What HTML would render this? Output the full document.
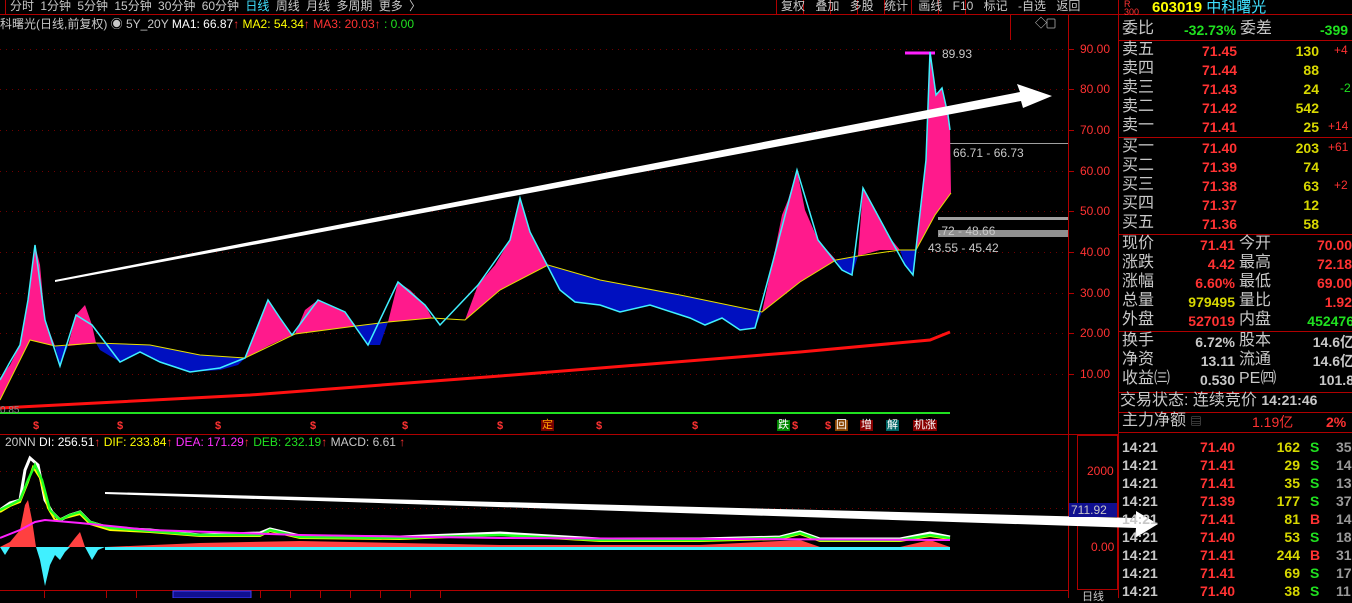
<!DOCTYPE html>
<html><head><meta charset="utf-8"><style>
*{margin:0;padding:0;box-sizing:border-box}
body{width:1352px;height:598px;background:#000;overflow:hidden;position:relative;font-family:"Liberation Sans","Noto Sans CJK SC",sans-serif;font-size:13px;color:#c8c8c8}
.a{position:absolute;white-space:nowrap;line-height:1}
.r{color:#ff3232}.y{color:#d8d800}.g{color:#20e020}.w{color:#c8c8c8}.c{color:#40e0ff}
.rp{position:absolute;left:1122px;width:230px;font-size:16px}
.rp div{position:absolute;white-space:nowrap;line-height:1}
.b{font-weight:bold}
</style></head><body>
<svg width="1352" height="598" style="position:absolute;left:0;top:0">
<line x1="0" y1="14.5" x2="1352" y2="14.5" stroke="#b00000"/>
<line x1="1068.5" y1="14" x2="1068.5" y2="598" stroke="#b00000"/>
<line x1="1118.5" y1="0" x2="1118.5" y2="598" stroke="#b00000"/>
<line x1="0" y1="434.5" x2="1068" y2="434.5" stroke="#b00000"/>
<line x1="0" y1="590.5" x2="1068" y2="590.5" stroke="#b00000"/>
<line x1="1068" y1="434.5" x2="1118" y2="434.5" stroke="#b00000"/>
<line x1="1118" y1="40.5" x2="1352" y2="40.5" stroke="#b00000"/>
<line x1="1118" y1="137.5" x2="1352" y2="137.5" stroke="#b00000"/>
<line x1="1118" y1="234.5" x2="1352" y2="234.5" stroke="#b00000"/>
<line x1="1118" y1="331.5" x2="1352" y2="331.5" stroke="#b00000"/>
<line x1="1118" y1="392.5" x2="1352" y2="392.5" stroke="#b00000"/>
<line x1="1118" y1="412.5" x2="1352" y2="412.5" stroke="#b00000"/>
<line x1="1118" y1="432.5" x2="1352" y2="432.5" stroke="#b00000"/>
<line x1="1010.5" y1="14" x2="1010.5" y2="40" stroke="#b00000"/>
<rect x="1077.5" y="435.5" width="40" height="154" fill="none" stroke="#b00000"/>
<g stroke="#b00000">
<line x1="776.5" y1="0" x2="776.5" y2="14"/><line x1="803.5" y1="0" x2="803.5" y2="14"/><line x1="830.5" y1="0" x2="830.5" y2="14"/><line x1="857.5" y1="0" x2="857.5" y2="14"/><line x1="884.5" y1="0" x2="884.5" y2="14"/><line x1="911.5" y1="0" x2="911.5" y2="14"/><line x1="938.5" y1="0" x2="938.5" y2="14"/><line x1="965.5" y1="0" x2="965.5" y2="14"/><line x1="5.5" y1="0" x2="5.5" y2="14"/></g>
<g stroke="#700000" stroke-dasharray="1,5">
<line x1="0" y1="49.5" x2="1068" y2="49.5"/><line x1="0" y1="89.5" x2="1068" y2="89.5"/><line x1="0" y1="130.5" x2="1068" y2="130.5"/><line x1="0" y1="171.5" x2="1068" y2="171.5"/><line x1="0" y1="211.5" x2="1068" y2="211.5"/><line x1="0" y1="252.5" x2="1068" y2="252.5"/><line x1="0" y1="293.5" x2="1068" y2="293.5"/><line x1="0" y1="333.5" x2="1068" y2="333.5"/><line x1="0" y1="374.5" x2="1068" y2="374.5"/>
<line x1="0" y1="471.5" x2="1068" y2="471.5"/><line x1="0" y1="508.5" x2="1068" y2="508.5"/>
</g>
<g stroke="#b00000"><line x1="1069" y1="49.5" x2="1074" y2="49.5"/><line x1="1069" y1="89.5" x2="1074" y2="89.5"/><line x1="1069" y1="130.5" x2="1074" y2="130.5"/><line x1="1069" y1="171.5" x2="1074" y2="171.5"/><line x1="1069" y1="211.5" x2="1074" y2="211.5"/><line x1="1069" y1="252.5" x2="1074" y2="252.5"/><line x1="1069" y1="293.5" x2="1074" y2="293.5"/><line x1="1069" y1="333.5" x2="1074" y2="333.5"/><line x1="1069" y1="374.5" x2="1074" y2="374.5"/></g>
<line x1="950" y1="143.5" x2="1068" y2="143.5" stroke="#a0a0a0"/>
<rect x="938" y="217" width="130" height="3" fill="#a0a0a0"/>
<rect x="938" y="230" width="130" height="7" fill="#909090"/>
<line x1="905" y1="53" x2="935" y2="53" stroke="#ff20ff" stroke-width="3"/>
<g fill="#ff1a8c">
<polygon points="0,378 10,365 20,345 28,300 35,245 40,265 45,320 55,346 30,340 0,400"/>
<polygon points="68,346 76,315 85,305 92,325 96,343"/>
<polygon points="245,358 258,325 268,300 280,318 292,335 270,345"/>
<polygon points="295,334 305,310 318,300 330,305 345,312 356,326 325,330"/>
<polygon points="388,322 398,282 410,290 425,305 432,318 410,320"/>
<polygon points="465,320 478,285 495,265 510,240 520,198 530,232 548,265 500,290"/>
<polygon points="762,312 772,265 782,215 788,200 797,170 805,210 818,240 836,260 800,282"/>
<polygon points="858,256 863,188 875,210 890,238 900,250 880,250"/>
<polygon points="916,250 922,200 926,160 930,52 936,95 942,88 948,115 950,130 951,193 935,215"/>
</g>
<g fill="#0010c0">
<polygon points="55,346 60,366 68,346"/>
<polygon points="96,343 150,345 200,355 245,358 238,365 220,370 190,372 160,362 140,352 120,362 100,350"/>
<polygon points="356,326 388,322 380,345 368,345"/>
<polygon points="548,265 600,280 680,295 762,312 755,328 740,330 722,318 705,325 690,318 668,310 650,305 620,312 600,305 575,302 560,290"/>
<polygon points="836,260 858,256 852,275 842,270"/>
<polygon points="900,250 916,250 913,275 905,265"/>
</g>
<polyline fill="none" stroke="#e8e000" stroke-width="1" points="0,400 30,340 55,346 96,343 150,345 200,355 245,358 295,334 356,326 388,322 432,318 465,320 500,290 548,265 600,280 680,295 762,312 800,282 836,260 858,256 900,250 916,250 935,215 951,193"/>
<polyline fill="none" stroke="#40f0ff" stroke-width="1.5" points="0,380 10,362 20,345 28,300 35,245 45,320 60,366 76,315 92,325 120,362 140,352 160,362 190,372 220,368 245,358 268,300 280,318 292,335 318,300 345,312 368,345 398,282 425,305 440,325 478,285 510,240 520,198 530,232 560,290 575,302 600,305 620,312 650,305 690,318 705,325 722,318 740,330 755,328 772,265 797,170 818,240 842,270 852,275 863,188 890,238 905,265 913,275 926,160 930,52 936,95 942,88 948,115 950,130"/>
<polyline fill="none" stroke="#ff1010" stroke-width="3" points="0,408 250,395 500,376 800,352 930,340 950,332"/>
<line x1="0" y1="413" x2="950" y2="413" stroke="#20e020" stroke-width="2"/>
<polygon points="55,280 1020,92 1017,84 1052,96 1023,108 1021,101 55,282" fill="#fff"/>
<polygon points="105,492 1136,518 1136,511 1158,524 1135,538 1136,528 105,494" fill="#fff"/>
<polygon points="0,547 10,542 20,530 25,505 28,500 32,520 36,547" fill="#ff4040"/>
<polygon points="36,547 40,560 45,586 50,565 55,555 60,560 65,552 70,547" fill="#40f0ff"/>
<polygon points="68,547 75,538 80,532 85,547" fill="#ff4040"/>
<polygon points="85,547 92,560 98,550 105,547" fill="#40f0ff"/>
<polygon points="105,547 200,543 300,541 500,545 700,545 800,540 820,547" fill="#ff4040"/>
<polygon points="0,547 5,555 10,547" fill="#40f0ff"/>
<rect x="105" y="547" width="845" height="3" fill="#40f0ff"/>
<polygon points="900,547 930,540 950,547" fill="#ff4040"/>
<polyline fill="none" stroke="#fff" stroke-width="3" points="0,510 10,503 20,500 25,470 30,458 38,465 45,500 52,512 60,520 70,515 80,512 90,522 110,528 150,530 200,535 260,533 270,529 300,536 400,537 500,533 600,539 700,539 780,537 800,532 820,539 900,539 930,533 950,537"/>
<polyline fill="none" stroke="#ffff00" stroke-width="2" points="0,512 10,506 20,502 28,482 33,467 40,478 48,508 55,520 65,518 80,514 90,524 110,530 150,532 200,536 260,536 270,531 300,538 400,539 500,535 600,541 700,541 780,539 800,534 820,541 900,541 930,536 950,539"/>
<polyline fill="none" stroke="#20ff20" stroke-width="2.5" points="0,510 10,505 20,500 28,480 35,465 42,480 50,510 60,520 70,515 80,512 90,522 110,528 150,531 200,535 260,535 270,530 300,537 400,538 500,535 600,540 700,540 780,538 800,533 820,540 900,540 930,535 950,538"/>
<polyline fill="none" stroke="#ff20ff" stroke-width="2" points="0,538 20,530 35,522 45,520 80,523 150,530 300,535 500,538 950,540"/>
<g stroke="#b00000"><line x1="44.5" y1="591" x2="44.5" y2="598"/><line x1="106.5" y1="591" x2="106.5" y2="598"/><line x1="136.5" y1="591" x2="136.5" y2="598"/><line x1="260.5" y1="591" x2="260.5" y2="598"/><line x1="290.5" y1="591" x2="290.5" y2="598"/><line x1="320.5" y1="591" x2="320.5" y2="598"/><line x1="350.5" y1="591" x2="350.5" y2="598"/><line x1="380.5" y1="591" x2="380.5" y2="598"/><line x1="410.5" y1="591" x2="410.5" y2="598"/><line x1="440.5" y1="591" x2="440.5" y2="598"/></g>
<rect x="173" y="591" width="78" height="7" fill="#101090" stroke="#4040ff"/>
<rect x="1069" y="503" width="48" height="14" fill="#101090"/>
<rect x="1047" y="19" width="8" height="9" fill="none" stroke="#888" rx="1"/>
</svg>
<div class="a w" style="left:10px;top:0;font-size:12px;word-spacing:3px">分时 1分钟 5分钟 15分钟 30分钟 60分钟 <span class="c">日线</span> 周线 月线 多周期 更多 〉</div>
<div class="a w" style="left:781px;top:0;font-size:12px;word-spacing:7px">复权 叠加 多股 统计 画线 F10 标记 -自选 返回</div>
<div class="a" style="left:1124px;top:0;font-size:9px;color:#ff3232;line-height:8px">R<br>300</div>
<div class="a" style="left:1152px;top:0;font-size:15px;font-weight:bold;color:#ffff00">603019 <span class="c" style="font-weight:normal">中科曙光</span></div>
<div class="a" style="left:0;top:18px;font-size:12px"><span class="w">科曙光(日线,前复权) ◉ 5Y_20Y</span> <span style="color:#fff">MA1: 66.87</span><span class="r">↑</span> <span style="color:#ffff00">MA2: 54.34</span><span class="r">↑</span> <span class="r">MA3: 20.03↑</span> <span class="g">: 0.00</span></div>
<div class="a w" style="left:1035px;top:17px;font-size:12px">◇</div>
<div class="a r" style="left:1080px;top:43px;font-size:12px">90.00</div>
<div class="a r" style="left:1080px;top:83px;font-size:12px">80.00</div>
<div class="a r" style="left:1080px;top:124px;font-size:12px">70.00</div>
<div class="a r" style="left:1080px;top:165px;font-size:12px">60.00</div>
<div class="a r" style="left:1080px;top:205px;font-size:12px">50.00</div>
<div class="a r" style="left:1080px;top:246px;font-size:12px">40.00</div>
<div class="a r" style="left:1080px;top:287px;font-size:12px">30.00</div>
<div class="a r" style="left:1080px;top:327px;font-size:12px">20.00</div>
<div class="a r" style="left:1080px;top:368px;font-size:12px">10.00</div>
<div class="a r" style="left:1087px;top:465px;font-size:12px">2000</div>
<div class="a r" style="left:1091px;top:541px;font-size:12px">0.00</div>
<div class="a w" style="left:1071px;top:504px;font-size:12px">711.92</div>
<div class="a w" style="left:1082px;top:592px;font-size:11px">日线</div>
<div class="a w" style="left:942px;top:48px;font-size:12px">89.93</div>
<div class="a w" style="left:953px;top:147px;font-size:12px">66.71 - 66.73</div>
<div class="a w" style="left:938px;top:225px;font-size:12px">.72 - 48.66</div>
<div class="a w" style="left:928px;top:242px;font-size:12px">43.55 - 45.42</div>
<div class="a w" style="left:0;top:406px;font-size:10px;color:#888">0.85</div>
<div class="a r" style="top:421px;left:0;font-size:11px;font-weight:bold">
<span style="position:absolute;left:33px">$</span><span style="position:absolute;left:117px">$</span><span style="position:absolute;left:215px">$</span><span style="position:absolute;left:310px">$</span><span style="position:absolute;left:402px">$</span><span style="position:absolute;left:497px">$</span><span style="position:absolute;left:596px">$</span><span style="position:absolute;left:692px">$</span><span style="position:absolute;left:792px">$</span><span style="position:absolute;left:825px">$</span></div>
<div class="a" style="left:541px;top:420px;font-size:11px;background:#700;color:#ffa000;padding:0 1px">定</div>
<div class="a" style="left:777px;top:420px;font-size:11px;background:#080;color:#fff;padding:0 1px">跌</div>
<div class="a" style="left:835px;top:420px;font-size:11px;background:#840;color:#fff;padding:0 1px">回</div>
<div class="a" style="left:860px;top:420px;font-size:11px;background:#800;color:#fff;padding:0 1px">增</div>
<div class="a" style="left:886px;top:420px;font-size:11px;background:#066;color:#fff;padding:0 1px">解</div>
<div class="a" style="left:913px;top:420px;font-size:11px;background:#800;color:#fff;padding:0 1px">机涨</div>
<div class="a" style="left:5px;top:436px;font-size:12px"><span class="w">20NN</span> <span style="color:#fff">DI: 256.51</span><span class="r">↑</span> <span style="color:#ffff00">DIF: 233.84</span><span class="r">↑</span> <span style="color:#ff30ff">DEA: 171.29</span><span class="r">↑</span> <span class="g">DEB: 232.19</span><span class="r">↑</span> <span class="w">MACD: 6.61</span> <span class="r">↑</span></div>
<div class="rp" style="top:0;height:598px">
<div style="left:0;top:21px" class="w">委比</div><div style="left:62px;top:23px;font-size:14px" class="g b">-32.73%</div><div style="left:118px;top:21px" class="w">委差</div><div style="left:198px;top:23px;font-size:14px" class="g b">-399</div>
</div>
<div class="rp" style="top:0;height:598px">
<div class="w" style="left:0;top:42px">卖五</div><div class="r b" style="left:80px;top:44px;font-size:14px">71.45</div><div class="y b" style="left:157px;top:44px;font-size:14px;width:40px;text-align:right">130</div><div class="r" style="left:212px;top:44px;font-size:12px">+4</div>
<div class="w" style="left:0;top:61px">卖四</div><div class="r b" style="left:80px;top:63px;font-size:14px">71.44</div><div class="y b" style="left:157px;top:63px;font-size:14px;width:40px;text-align:right">88</div>
<div class="w" style="left:0;top:80px">卖三</div><div class="r b" style="left:80px;top:82px;font-size:14px">71.43</div><div class="y b" style="left:157px;top:82px;font-size:14px;width:40px;text-align:right">24</div><div class="g" style="left:218px;top:82px;font-size:12px">-2</div>
<div class="w" style="left:0;top:99px">卖二</div><div class="r b" style="left:80px;top:101px;font-size:14px">71.42</div><div class="y b" style="left:157px;top:101px;font-size:14px;width:40px;text-align:right">542</div>
<div class="w" style="left:0;top:118px">卖一</div><div class="r b" style="left:80px;top:120px;font-size:14px">71.41</div><div class="y b" style="left:157px;top:120px;font-size:14px;width:40px;text-align:right">25</div><div class="r" style="left:206px;top:120px;font-size:12px">+14</div>
<div class="w" style="left:0;top:139px">买一</div><div class="r b" style="left:80px;top:141px;font-size:14px">71.40</div><div class="y b" style="left:157px;top:141px;font-size:14px;width:40px;text-align:right">203</div><div class="r" style="left:206px;top:141px;font-size:12px">+61</div>
<div class="w" style="left:0;top:158px">买二</div><div class="r b" style="left:80px;top:160px;font-size:14px">71.39</div><div class="y b" style="left:157px;top:160px;font-size:14px;width:40px;text-align:right">74</div>
<div class="w" style="left:0;top:177px">买三</div><div class="r b" style="left:80px;top:179px;font-size:14px">71.38</div><div class="y b" style="left:157px;top:179px;font-size:14px;width:40px;text-align:right">63</div><div class="r" style="left:212px;top:179px;font-size:12px">+2</div>
<div class="w" style="left:0;top:196px">买四</div><div class="r b" style="left:80px;top:198px;font-size:14px">71.37</div><div class="y b" style="left:157px;top:198px;font-size:14px;width:40px;text-align:right">12</div>
<div class="w" style="left:0;top:215px">买五</div><div class="r b" style="left:80px;top:217px;font-size:14px">71.36</div><div class="y b" style="left:157px;top:217px;font-size:14px;width:40px;text-align:right">58</div>
<div class="w" style="left:0;top:236px">现价</div><div class="r b" style="left:40px;top:238px;width:73px;text-align:right;font-size:14px">71.41</div><div class="w" style="left:117px;top:236px">今开</div><div class="r b" style="left:160px;top:238px;width:70px;text-align:right;font-size:14px">70.00</div>
<div class="w" style="left:0;top:255px">涨跌</div><div class="r b" style="left:40px;top:257px;width:73px;text-align:right;font-size:14px">4.42</div><div class="w" style="left:117px;top:255px">最高</div><div class="r b" style="left:160px;top:257px;width:70px;text-align:right;font-size:14px">72.18</div>
<div class="w" style="left:0;top:274px">涨幅</div><div class="r b" style="left:40px;top:276px;width:73px;text-align:right;font-size:14px">6.60%</div><div class="w" style="left:117px;top:274px">最低</div><div class="r b" style="left:160px;top:276px;width:70px;text-align:right;font-size:14px">69.00</div>
<div class="w" style="left:0;top:293px">总量</div><div class="y b" style="left:40px;top:295px;width:73px;text-align:right;font-size:14px">979495</div><div class="w" style="left:117px;top:293px">量比</div><div class="r b" style="left:160px;top:295px;width:70px;text-align:right;font-size:14px">1.92</div>
<div class="w" style="left:0;top:312px">外盘</div><div class="r b" style="left:40px;top:314px;width:73px;text-align:right;font-size:14px">527019</div><div class="w" style="left:117px;top:312px">内盘</div><div class="g b" style="left:160px;top:314px;width:72px;text-align:right;font-size:14px">452476</div>
<div class="w" style="left:0;top:333px">换手</div><div class="w b" style="left:40px;top:335px;width:73px;text-align:right;font-size:14px">6.72%</div><div class="w" style="left:117px;top:333px">股本</div><div class="w b" style="left:160px;top:335px;width:72px;text-align:right;font-size:14px">14.6亿</div>
<div class="w" style="left:0;top:352px">净资</div><div class="w b" style="left:40px;top:354px;width:73px;text-align:right;font-size:14px">13.11</div><div class="w" style="left:117px;top:352px">流通</div><div class="w b" style="left:160px;top:354px;width:72px;text-align:right;font-size:14px">14.6亿</div>
<div class="w" style="left:0;top:371px">收益㈢</div><div class="w b" style="left:40px;top:373px;width:73px;text-align:right;font-size:14px">0.530</div><div class="w" style="left:117px;top:371px">PE㈣</div><div class="w b" style="left:160px;top:373px;width:72px;text-align:right;font-size:14px">101.8</div>
<div class="w" style="left:-2px;top:393px">交易状态: 连续竞价 <span class="b" style="font-size:14px">14:21:46</span></div>
<div class="w" style="left:0;top:413px">主力净额 <span style="font-size:11px;color:#888">▤</span></div><div class="r" style="left:130px;top:415px;font-size:14px">1.19亿</div><div class="r b" style="left:204px;top:415px;font-size:14px">2%</div>
</div>
<div class="rp b" style="top:0;height:598px;font-size:14px">
<div class="w" style="left:0;top:438px;line-height:18px">14:21<br>14:21<br>14:21<br>14:21<br>14:21<br>14:21<br>14:21<br>14:21<br>14:21</div>
<div class="r" style="left:78px;top:438px;line-height:18px">71.40<br>71.41<br>71.41<br>71.39<br>71.41<br>71.40<br>71.41<br>71.41<br>71.40</div>
<div class="y" style="left:140px;top:438px;line-height:18px;width:38px;text-align:right">162<br>29<br>35<br>177<br>81<br>53<br>244<br>69<br>38</div>
<div style="left:188px;top:438px;line-height:18px"><span class="g">S</span><br><span class="g">S</span><br><span class="g">S</span><br><span class="g">S</span><br><span class="r">B</span><br><span class="g">S</span><br><span class="r">B</span><br><span class="g">S</span><br><span class="g">S</span></div>
<div style="left:214px;top:438px;line-height:18px;color:#999">35<br>14<br>13<br>37<br>14<br>18<br>31<br>17<br>11</div>
</div>
</body></html>
